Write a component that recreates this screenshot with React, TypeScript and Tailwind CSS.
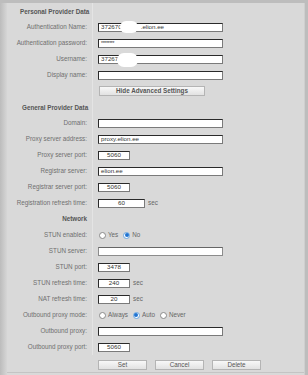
import type { ReactNode } from "react";

const font = { fontFamily: '"Liberation Sans", Arial, sans-serif' };

function Field({ w = "w-[125px]", center, dim, children }: { w?: string; center?: boolean; dim?: boolean; children?: ReactNode }) {
  return (
    <div
      className={`relative flex h-[9px] items-center overflow-visible border bg-white px-[2px] text-[6.2px] leading-none text-[#333] ${w} ${
        center ? "justify-center" : ""
      } ${dim ? "border-[#8c8c8c] border-t-[#666]" : "border-[#2a2a2a] border-r-[#7a7a7a] border-b-[#7a7a7a]"}`}
    >
      {children}
    </div>
  );
}

function Blob({ className }: { className: string }) {
  return <span className={`absolute rounded-full bg-white ${className}`} />;
}

function Radio({ on, label }: { on?: boolean; label: string }) {
  return (
    <span className="flex items-center gap-[2px]">
      <span
        className={`flex h-[7px] w-[7px] items-center justify-center rounded-full border bg-white ${
          on ? "border-[#6aa6e0]" : "border-[#8a8a8a]"
        }`}
      >
        {on && <span className="h-[4px] w-[4px] rounded-full bg-[#1f73d1]" />}
      </span>
      <span>{label}</span>
    </span>
  );
}

function Row({ label, bold, children }: { label?: ReactNode; bold?: boolean; children?: ReactNode }) {
  return (
    <div className="flex h-[16px]">
      <div
        className={`flex w-[86px] shrink-0 items-center justify-end border-r border-[#e4e4e4] pr-[5px] ${
          bold ? "font-bold text-[#555]" : "text-[#6f6f6f]"
        }`}
      >
        {label}
      </div>
      <div className="flex flex-1 items-center gap-[3px] pl-[5px] text-[#666]">{children}</div>
    </div>
  );
}

function Head({ text, pad }: { text: string; pad: string }) {
  return (
    <div className="flex h-[16px]">
      <div className={`flex w-[86px] shrink-0 items-center border-r border-[#e4e4e4] pt-[3px] font-semibold text-[#555] ${pad}`}>{text}</div>
      <div className="flex-1" />
    </div>
  );
}

function Btn({ w, bold, children }: { w: string; bold?: boolean; children: ReactNode }) {
  return (
    <div
      className={`flex h-[10px] items-center justify-center border border-[#b4b4b4] bg-gradient-to-b from-[#f8f8f8] to-[#e2e2e2] text-[#555] ${w} ${
        bold ? "font-bold" : ""
      }`}
    >
      {children}
    </div>
  );
}

export default function App() {
  return (
    <div className="flex h-[375px] w-[308px] border-t-[3px] border-[#bdbdbd] bg-[#d9d9d9] text-[6.3px] leading-none" style={font}>
      <div className="w-[7px] shrink-0 bg-gradient-to-r from-[#bcbcbc] to-[#d6d6d6]" />
      <div className="flex flex-1 flex-col">
        <Head text="Personal Provider Data" pad="pl-[13px]" />
        <Row label="Authentication Name:">
          <Field>
            <span>372670</span>
            <Blob className="left-[21px] top-[-3px] h-[12px] w-[18px]" />
            <span className="ml-[19px]">.elion.ee</span>
          </Field>
        </Row>
        <Row label="Authentication password:">
          <Field>
            <span className="text-[5px] tracking-[-0.3px]">********</span>
          </Field>
        </Row>
        <Row label="Username:">
          <Field>
            <span>37267</span>
            <Blob className="left-[18px] top-[-3px] h-[14px] w-[21px]" />
          </Field>
        </Row>
        <Row label="Display name:">
          <Field />
        </Row>
        <Row>
          <div className="pl-[1px]">
            <Btn w="w-[106px]" bold>
              Hide Advanced Settings
            </Btn>
          </div>
        </Row>
        <Head text="General Provider Data" pad="pl-[15px]" />
        <Row label="Domain:">
          <Field />
        </Row>
        <Row label="Proxy server address:">
          <Field>proxy.elion.ee</Field>
        </Row>
        <Row label="Proxy server port:">
          <Field w="w-[32px]" center>
            5060
          </Field>
        </Row>
        <Row label="Registrar server:">
          <Field>elion.ee</Field>
        </Row>
        <Row label="Registrar server port:">
          <Field w="w-[32px]" center>
            5060
          </Field>
        </Row>
        <Row label="Registration refresh time:">
          <Field w="w-[47px]" center>
            60
          </Field>
          <span>sec</span>
        </Row>
        <Row label="Network" bold />
        <Row label="STUN enabled:">
          <div className="flex items-center gap-[5px] pl-[1px]">
            <Radio label="Yes" />
            <Radio on label="No" />
          </div>
        </Row>
        <Row label="STUN server:">
          <Field dim />
        </Row>
        <Row label="STUN port:">
          <Field w="w-[32px]" center>
            3478
          </Field>
        </Row>
        <Row label="STUN refresh time:">
          <Field w="w-[32px]" center>
            240
          </Field>
          <span>sec</span>
        </Row>
        <Row label="NAT refresh time:">
          <Field w="w-[32px]" center>
            20
          </Field>
          <span>sec</span>
        </Row>
        <Row label="Outbound proxy mode:">
          <div className="flex items-center gap-[5px] pl-[1px]">
            <Radio label="Always" />
            <Radio on label="Auto" />
            <Radio label="Never" />
          </div>
        </Row>
        <Row label="Outbound proxy:">
          <Field />
        </Row>
        <Row label="Outbound proxy port:">
          <Field w="w-[32px]" center>
            5060
          </Field>
        </Row>
        <div className="mt-[5px] flex gap-[8px] pl-[91px]">
          <Btn w="w-[49px]">Set</Btn>
          <Btn w="w-[49px]">Cancel</Btn>
          <Btn w="w-[49px]">Delete</Btn>
        </div>
        <div className="mt-[2px] border-b border-[#c4c4c4]" />
      </div>
      <div className="w-[4px] shrink-0 border-l border-[#cfcfcf] bg-[#bdbdbd]" />
    </div>
  );
}
